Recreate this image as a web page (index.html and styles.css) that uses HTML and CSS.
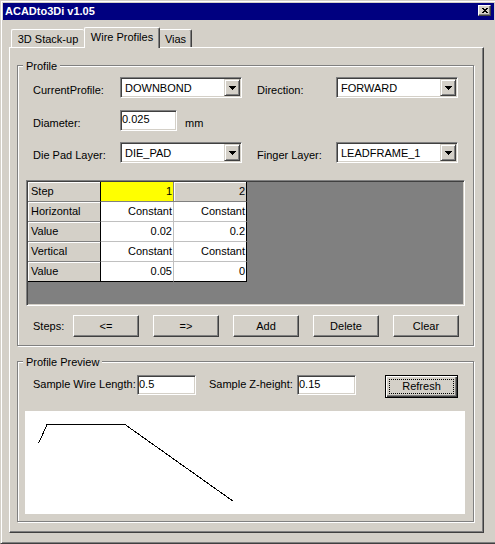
FILE: index.html
```html
<!DOCTYPE html>
<html>
<head>
<meta charset="utf-8">
<title>ACADto3Di v1.05</title>
<link rel="stylesheet" href="styles.css">
</head>
<body>
<div class="window">
  <div class="titlebar">
    <span class="title">ACADto3Di v1.05</span>
    <span class="close"><svg width="6" height="5" viewBox="0 0 6 5"><path d="M0 0h2v1H0z M4 0h2v1H4z M1 1h4v1H1z M2 2h2v1H2z M1 3h4v1H1z M0 4h2v1H0z M4 4h2v1H4z" fill="#000"/></svg></span>
  </div>
  <div class="client">
    <div class="tabs">
      <div class="tab tab1">3D Stack-up</div>
      <div class="tab tab2 selected">Wire Profiles</div>
      <div class="tab tab3">Vias</div>
    </div>
    <div class="panel">
      <div class="group g1">
        <div class="legend">Profile</div>
        <div class="row r1">
          <span class="lbl la">CurrentProfile:</span>
          <div class="combo"><span class="ctext">DOWNBOND</span><span class="ddbtn"><svg width="7" height="4" viewBox="0 0 7 4"><path d="M0 0h7v1H0z M1 1h5v1H1z M2 2h3v1H2z M3 3h1v1H3z" fill="#000"/></svg></span></div>
          <span class="lbl lb">Direction:</span>
          <div class="combo"><span class="ctext">FORWARD</span><span class="ddbtn"><svg width="7" height="4" viewBox="0 0 7 4"><path d="M0 0h7v1H0z M1 1h5v1H1z M2 2h3v1H2z M3 3h1v1H3z" fill="#000"/></svg></span></div>
        </div>
        <div class="row r2">
          <span class="lbl la">Diameter:</span>
          <div class="edit dia">0.025</div>
          <span class="lbl unit">mm</span>
        </div>
        <div class="row r3">
          <span class="lbl la">Die Pad Layer:</span>
          <div class="combo"><span class="ctext">DIE_PAD</span><span class="ddbtn"><svg width="7" height="4" viewBox="0 0 7 4"><path d="M0 0h7v1H0z M1 1h5v1H1z M2 2h3v1H2z M3 3h1v1H3z" fill="#000"/></svg></span></div>
          <span class="lbl lb">Finger Layer:</span>
          <div class="combo"><span class="ctext">LEADFRAME_1</span><span class="ddbtn"><svg width="7" height="4" viewBox="0 0 7 4"><path d="M0 0h7v1H0z M1 1h5v1H1z M2 2h3v1H2z M3 3h1v1H3z" fill="#000"/></svg></span></div>
        </div>
        <div class="gridbox">
          <div class="fg">
            <div class="fx hd">Step</div>
            <div class="sel">1</div>
            <div class="fx lastcol">2</div>

            <div class="fx hd">Horizontal</div>
            <div>Constant</div>
            <div class="lastcol">Constant</div>

            <div class="fx hd">Value</div>
            <div>0.02</div>
            <div class="lastcol">0.2</div>

            <div class="fx hd">Vertical</div>
            <div>Constant</div>
            <div class="lastcol">Constant</div>

            <div class="fx hd lastrow">Value</div>
            <div class="lastrow">0.05</div>
            <div class="lastcol lastrow">0</div>
          </div>
        </div>
        <div class="row steps">
          <span class="lbl ls">Steps:</span>
          <button class="btn">&lt;=</button>
          <button class="btn">=&gt;</button>
          <button class="btn">Add</button>
          <button class="btn">Delete</button>
          <button class="btn">Clear</button>
        </div>
      </div>
      <div class="group g2">
        <div class="legend">Profile Preview</div>
        <div class="row prow">
          <span class="lbl lswl">Sample Wire Length:</span>
          <div class="edit sm">0.5</div>
          <span class="lbl lszh">Sample Z-height:</span>
          <div class="edit sm">0.15</div>
          <button class="btn refresh"><span class="focus">Refresh</span></button>
        </div>
        <div class="canvas">
          <svg width="440" height="103" viewBox="0 0 440 103" shape-rendering="crispEdges">
            <polyline points="13.5,32.5 22,13.5 100,13.5 208.5,90.5" fill="none" stroke="#000" stroke-width="1"/>
          </svg>
        </div>
      </div>
    </div>
  </div>
</div>
</body>
</html>
```

FILE: styles.css
```css
* { box-sizing: border-box; margin: 0; padding: 0; }
html, body { width: 495px; height: 544px; overflow: hidden; }
body {
  background: #d4d0c8;
  font-family: "Liberation Sans", Arial, sans-serif;
  font-size: 11px;
  line-height: 13px;
  color: #000;
}

.window {
  width: 495px;
  height: 544px;
  background: #d4d0c8;
  border-style: solid;
  border-width: 1px 0 1px 1px;
  border-color: #d4d0c8 transparent #404040 #d4d0c8;
  box-shadow: inset 1px 1px #fff, inset 0 -1px #808080;
  padding: 2px 1px 0 2px;
}

.titlebar {
  height: 17px;
  background: #000080;
  display: flex;
  align-items: flex-start;
  justify-content: space-between;
  padding: 0 3px 0 2px;
}
.title {
  color: #fff;
  font-weight: bold;
  line-height: 17px;
}
.close {
  margin-top: 2px;
  width: 13px;
  height: 11px;
  background: #d4d0c8;
  border: 1px solid;
  border-color: #fff #404040 #404040 #fff;
  box-shadow: inset -1px -1px #808080;
  display: flex;
  align-items: center;
  justify-content: center;
}
.close svg { display: block; }

.client { padding-top: 7px; }

.tabs {
  display: flex;
  align-items: flex-end;
  height: 20px;
  margin-left: 6px;
  padding-left: 2px;
  position: relative;
  z-index: 1;
}
.tab {
  height: 18px;
  background: #d4d0c8;
  border-top: 1px solid #fff;
  border-left: 1px solid #fff;
  border-right: 1px solid #404040;
  box-shadow: inset -1px 0 #808080;
  border-radius: 2px 2px 0 0;
  text-align: center;
  padding-top: 3px;
  white-space: nowrap;
}
.tab1 { width: 73px; border-right: none; box-shadow: none; }
.tab2.selected { width: 76px; height: 21px; margin-bottom: -1px; padding-top: 3px; }
.tab3 { width: 32px; border-left: none; border-radius: 0 2px 0 0; }

.panel {
  margin-left: 6px;
  width: 475px;
  height: 486px;
  border: 1px solid;
  border-color: #fff #404040 #404040 #fff;
  box-shadow: inset -1px -1px #808080;
  padding: 17px 0 0 7px;
}

.group {
  width: 457px;
  border: 1px solid #808080;
  box-shadow: 1px 1px #fff, inset 1px 1px #fff;
}
.g1 { height: 281px; }
.g2 { height: 161px; margin-top: 15px; }
.legend {
  width: fit-content;
  margin: -6px 0 0 5px;
  padding: 0 3px;
  background: #d4d0c8;
}

.row { display: flex; align-items: flex-start; padding-left: 15px; }
.r1 { margin-top: 4px; }
.r2 { margin-top: 12px; }
.r3 { margin-top: 11px; }
.lbl { padding-top: 7px; white-space: nowrap; }
.la { width: 87px; }
.lb { width: 79px; margin-left: 15px; }
.unit { margin-left: 8px; }

.combo {
  width: 122px;
  height: 21px;
  background: #fff;
  border: 1px solid;
  border-color: #808080 #fff #fff #808080;
  box-shadow: inset 1px 1px #404040, inset -1px -1px #d4d0c8;
  padding: 1px;
  display: flex;
}
.ctext {
  flex: 1;
  padding: 3px 0 0 3px;
  overflow: hidden;
  white-space: nowrap;
}
.ddbtn {
  width: 16px;
  height: 17px;
  background: #d4d0c8;
  border: 1px solid;
  border-color: #d4d0c8 #404040 #404040 #d4d0c8;
  box-shadow: inset 1px 1px #fff, inset -1px -1px #808080;
  display: flex;
  align-items: center;
  justify-content: center;
}
.ddbtn svg { display: block; }

.edit {
  height: 21px;
  background: #fff;
  border: 1px solid;
  border-color: #808080 #fff #fff #808080;
  box-shadow: inset 1px 1px #404040, inset -1px -1px #d4d0c8;
  padding: 2px 0 0 1px;
  white-space: nowrap;
}
.dia { width: 57px; }
.edit.sm { width: 59px; height: 20px; }

.gridbox {
  margin: 17px 0 0 8px;
  width: 439px;
  height: 126px;
  background: #808080;
  border: 1px solid;
  border-color: #808080 #fff #fff #808080;
  box-shadow: inset 1px 1px #404040, inset -1px -1px #d4d0c8;
  padding: 1px;
}
.fg {
  display: grid;
  grid-template-columns: repeat(3, 73px);
  grid-auto-rows: 20px;
  width: 219px;
}
.fg div {
  background: #fff;
  border-right: 1px solid #c0c0c0;
  border-bottom: 1px solid #c0c0c0;
  line-height: 19px;
  text-align: right;
  padding-right: 1px;
  white-space: nowrap;
  overflow: hidden;
}
.fg .fx {
  background: #d4d0c8;
  border-bottom-color: #808080;
  box-shadow: inset 1px 1px #fff;
}
.fg .hd {
  text-align: left;
  padding-left: 3px;
  border-right-color: #000;
}
.fg .sel {
  background: #ffff00;
  border-right-color: #808080;
  border-bottom-color: #808080;
}
.fg .lastcol { border-right-color: #000; }
.fg .lastrow { border-bottom-color: #000; }

.steps { margin-top: 9px; align-items: center; }
.ls { width: 40px; padding-top: 0; }

.btn {
  font: inherit;
  color: #000;
  width: 66px;
  height: 22px;
  margin-right: 14px;
  background: #d4d0c8;
  border: 1px solid;
  border-color: #fff #404040 #404040 #fff;
  box-shadow: inset -1px -1px #808080;
  padding: 0;
  line-height: 13px;
  text-align: center;
}

.prow { margin-top: 6px; }
.lswl { width: 104px; padding-top: 3px; }
.lszh { width: 88px; margin-left: 13px; padding-top: 3px; }
.btn.refresh {
  margin: 0 0 0 29px;
  width: 73px;
  height: 23px;
  border: 1px solid #000;
  box-shadow: inset 1px 1px #fff, inset -1px -1px #404040, inset -2px -2px #808080;
  padding: 3px;
}
.focus {
  display: block;
  height: 15px;
  border: 1px dotted #000;
  line-height: 13px;
}

.canvas {
  margin: 13px 0 0 7px;
  width: 440px;
  height: 103px;
  background: #fff;
}
.canvas svg { display: block; }
```
